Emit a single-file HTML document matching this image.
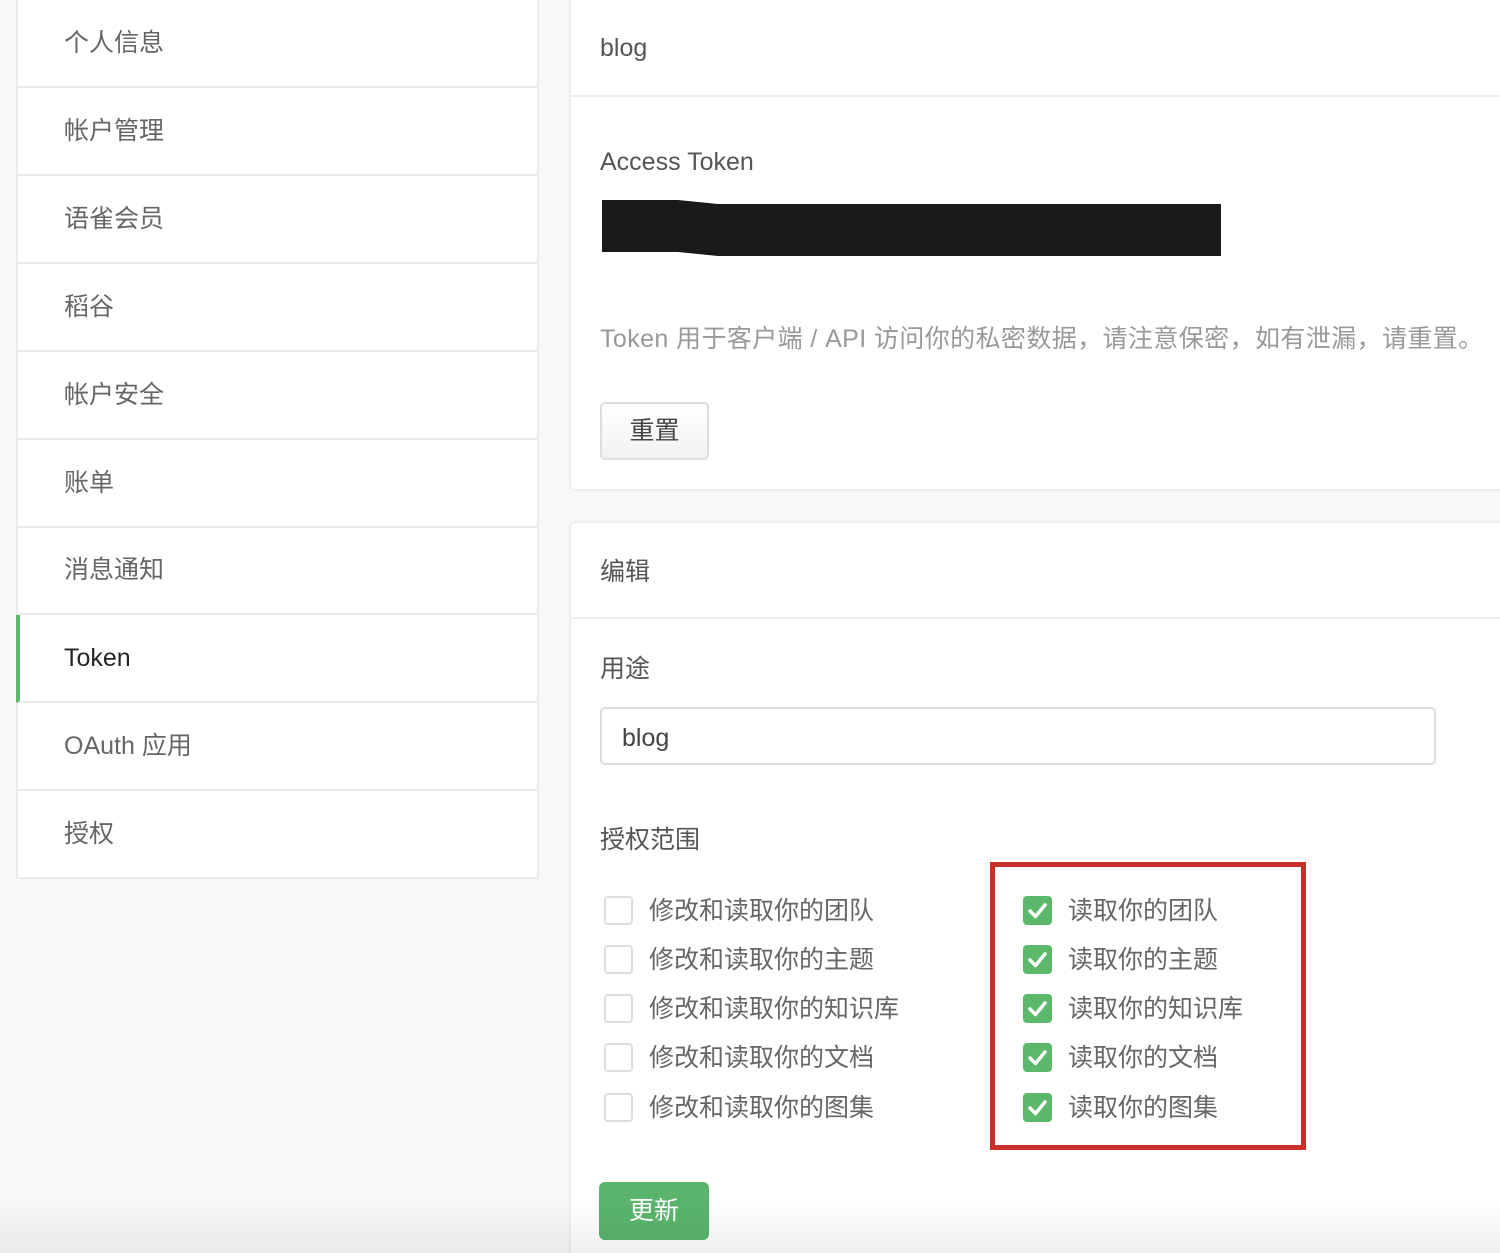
<!DOCTYPE html>
<html style="width:1500px;height:1253px;overflow:hidden"><head><meta charset="utf-8"><style>
*{box-sizing:border-box;margin:0;padding:0}
body{width:1500px;height:1253px;background:#f8f8f8;position:relative;overflow:hidden;font-family:"Liberation Sans","Noto Sans CJK SC",sans-serif;color:#595959}
.a{position:absolute}
.side{left:16px;top:-2px;width:523px;height:881px;background:#fff;border:2px solid #ebebeb}
.item{position:absolute;left:0;width:519px;height:88px;border-bottom:2px solid #ebebeb;font-size:25px;line-height:86px;padding-left:46px;color:#666}
.card{background:#fff;border:2px solid #eee;border-radius:6px}
.t{font-size:25px;color:#555;white-space:nowrap}
.cb{position:absolute;width:29px;height:29px;border:2px solid #ddd;border-radius:4px;background:#fff}
.ck{position:absolute;width:29px;height:29px;border-radius:4px;background:#5cb86a}
.lbl{position:absolute;font-size:25px;color:#666;white-space:nowrap;line-height:30px}
</style></head><body>
<div class="a side">
<div class="item" style="top:0">个人信息</div>
<div class="item" style="top:88px">帐户管理</div>
<div class="item" style="top:176px">语雀会员</div>
<div class="item" style="top:264px">稻谷</div>
<div class="item" style="top:352px">帐户安全</div>
<div class="item" style="top:440px">账单</div>
<div class="item" style="top:527px">消息通知</div>
<div class="item" style="top:615px;color:#262626;border-left:4px solid #5cb86a;padding-left:44px;left:-2px;width:521px">Token</div>
<div class="item" style="top:703px">OAuth 应用</div>
<div class="item" style="top:791px;border-bottom:none">授权</div>
</div>

<div class="a card" style="left:569px;top:-8px;width:960px;height:499px"></div>
<div class="a" style="left:571px;top:95px;width:940px;height:2px;background:#eee"></div>
<div class="a t" style="left:600px;top:34px;font-size:25px">blog</div>
<div class="a t" style="left:600px;top:148px">Access Token</div>
<svg class="a" style="left:600px;top:197px" width="624" height="62"><path d="M2 3 L78 3 L118 7 L621 7 L621 59 L118 59 L78 55 L2 55 Z" fill="#1a1a1a"/></svg>
<div class="a t" style="left:600px;top:319px;color:#999;letter-spacing:0.4px">Token 用于客户端 / API 访问你的私密数据，请注意保密，如有泄漏，请重置。</div>
<div class="a" style="left:600px;top:402px;width:109px;height:58px;border:2px solid #ddd;border-radius:5px;background:linear-gradient(#fff,#f2f2f2);font-size:25px;line-height:54px;text-align:center;color:#444">重置</div>

<div class="a card" style="left:569px;top:521px;width:960px;height:740px"></div>
<div class="a" style="left:571px;top:617px;width:940px;height:2px;background:#eee"></div>
<div class="a t" style="left:600px;top:552px">编辑</div>
<div class="a t" style="left:600px;top:649px">用途</div>
<div class="a" style="left:600px;top:707px;width:836px;height:58px;border:2px solid #ddd;border-radius:5px;font-size:25px;line-height:58px;padding-left:20px;color:#444">blog</div>
<div class="a t" style="left:600px;top:820px">授权范围</div>

<div class="cb" style="left:604px;top:896px"></div><div class="lbl" style="left:649px;top:896px">修改和读取你的团队</div>
<div class="cb" style="left:604px;top:945px"></div><div class="lbl" style="left:649px;top:945px">修改和读取你的主题</div>
<div class="cb" style="left:604px;top:994px"></div><div class="lbl" style="left:649px;top:994px">修改和读取你的知识库</div>
<div class="cb" style="left:604px;top:1043px"></div><div class="lbl" style="left:649px;top:1043px">修改和读取你的文档</div>
<div class="cb" style="left:604px;top:1093px"></div><div class="lbl" style="left:649px;top:1093px">修改和读取你的图集</div>

<div class="a" style="left:990px;top:862px;width:316px;height:288px;border:5px solid #c9302c"></div>
<svg width="0" height="0" style="position:absolute"><defs><path id="m" d="M7 15 L12.5 20.5 L22 9" fill="none" stroke="#fff" stroke-width="3.5" stroke-linecap="round" stroke-linejoin="round"/></defs></svg>
<div class="ck" style="left:1023px;top:896px"><svg width="29" height="29"><use href="#m"/></svg></div><div class="lbl" style="left:1068px;top:896px">读取你的团队</div>
<div class="ck" style="left:1023px;top:945px"><svg width="29" height="29"><use href="#m"/></svg></div><div class="lbl" style="left:1068px;top:945px">读取你的主题</div>
<div class="ck" style="left:1023px;top:994px"><svg width="29" height="29"><use href="#m"/></svg></div><div class="lbl" style="left:1068px;top:994px">读取你的知识库</div>
<div class="ck" style="left:1023px;top:1043px"><svg width="29" height="29"><use href="#m"/></svg></div><div class="lbl" style="left:1068px;top:1043px">读取你的文档</div>
<div class="ck" style="left:1023px;top:1093px"><svg width="29" height="29"><use href="#m"/></svg></div><div class="lbl" style="left:1068px;top:1093px">读取你的图集</div>

<div class="a" style="left:599px;top:1182px;width:110px;height:58px;border-radius:6px;background:#5ab46c;color:#fff;font-size:25px;line-height:58px;text-align:center">更新</div>
<div class="a" style="left:0;top:1200px;width:1500px;height:53px;background:linear-gradient(rgba(0,0,0,0),rgba(0,0,0,0.06))"></div>
</body></html>
